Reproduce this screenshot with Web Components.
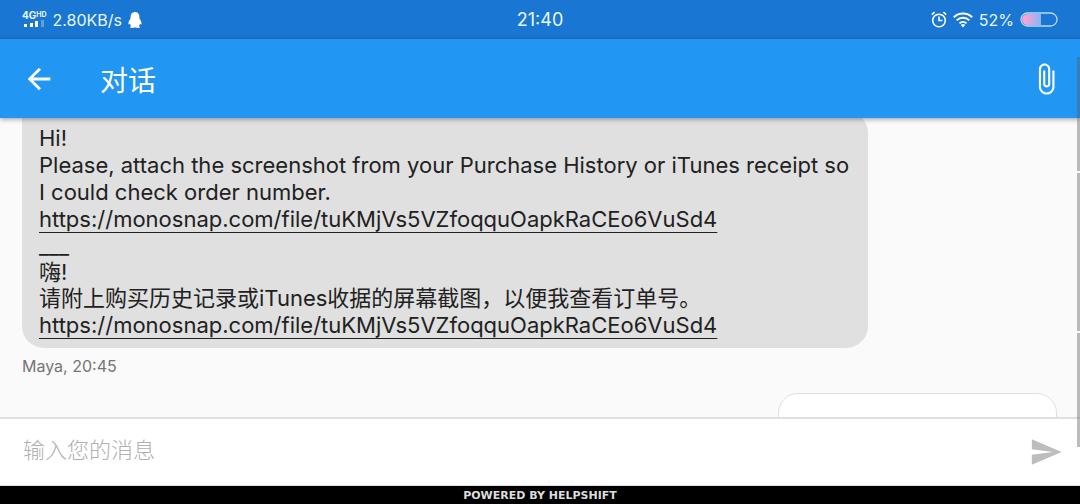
<!DOCTYPE html>
<html lang="zh-CN">
<head>
<meta charset="utf-8">
<meta name="viewport" content="width=device-width, initial-scale=1">
<title>对话</title>
<style>
html, body { margin: 0; height: 100%; }
body { font-family: Inter, "Noto Sans CJK SC", sans-serif; }
</style>
</head>
<body>
<chat-app></chat-app>
<script>
function define(name, html) {
  const template = document.createElement('template');
  template.innerHTML = html;
  customElements.define(name, class extends HTMLElement {
    constructor() {
      super();
      this.attachShadow({ mode: 'open' }).append(template.content.cloneNode(true));
    }
  });
}

define('status-bar', `
<style>
:host { display: grid; grid-template-columns: 1fr auto 1fr; align-items: center; height: 39px; padding: 0 22px; background: #1976d2; color: #e8f8ff; font-size: 16px; line-height: 20px; }
.group { display: flex; align-items: center; gap: 6px; }
.end { justify-content: flex-end; }
.time { font-size: 18px; }
svg { display: block; flex: none; }
.net { display: grid; grid-template-columns: auto auto; font-weight: 700; font-size: 10px; line-height: 9px; }
.net sup { font-size: 7px; line-height: 7px; vertical-align: top; }
.net svg { grid-column: 1 / -1; }
</style>
<div class="group">
  <div class="net"><span>4G</span><sup>HD</sup>
    <svg width="24" height="8" viewBox="0 0 24 8" fill="#fff"><path d="M2 4h3v3H2zM8 3h3v4H8zM13 1h3v6h-3z"/><path d="M19 0h3v7h-3z" opacity=".3"/></svg>
  </div>
  <span>2.80KB/s</span>
  <svg width="14" height="16" viewBox="0 0 14 16" fill="#fff"><path d="M7 0C4 0 2.600 2.200 2.600 5v1.500C1.200 8.200.300 10.200.500 12c.2.900.8.500 1.500-.3.200.900.600 1.600 1.200 2.200-.700.300-1.200.600-1.200 1.100 0 1.100 3.800 1.200 5 .300 1.200.900 5 .800 5-.300 0-.500-.500-.800-1.200-1.100.600-.600 1-1.300 1.200-2.200.700.800 1.300 1.200 1.500.300.200-1.800-.700-3.800-2.100-5.500V5C11.400 2.200 10 0 7 0z"/></svg>
</div>
<time class="time">21:40</time>
<div class="group end">
  <svg width="16" height="17" viewBox="0 0 16 17" fill="none" stroke="#fff" stroke-width="1.600"><circle cx="8" cy="9.500" r="6.300"/><path d="M8 5.500v4h3.500M.8 3.600 3.600 1.200M15.200 3.600l-2.800-2.400"/></svg>
  <svg width="20" height="16" viewBox="0 0 20 16" fill="none" stroke="#fff" stroke-width="2"><path d="M.8 5.200a13.200 13.200 0 0 1 18.400 0M3.700 8.400a9 9 0 0 1 12.600 0M6.500 11.400a5 5 0 0 1 7 0"/><path d="M7.800 13 10 15.500 12.200 13a3.300 3.300 0 0 0-4.400 0z" fill="#fff" stroke="none"/></svg>
  <span>52%</span>
  <svg width="38" height="15" viewBox="0 0 38 15"><defs><linearGradient id="g"><stop offset=".2" stop-color="#f4a4d5"/><stop offset="1" stop-color="#88b4f5"/></linearGradient></defs><path d="M21 2v11H7.500a5.500 5.500 0 0 1 0-11z" fill="url(#g)"/><rect x="1" y="1" width="36" height="13" rx="6.500" fill="none" stroke="#b5dcf6" stroke-width="1.300"/></svg>
</div>`);

define('tool-bar', `
<style>
:host { display: flex; align-items: center; height: 79px; padding: 0 17px 0 22px; background: #2196f3; color: #fff; box-shadow: 0 1px 5px rgba(0,0,0,.4); }
button { display: block; border: 0; padding: 0; background: none; color: inherit; }
svg { display: block; }
h1 { flex: 1; margin: 0 0 0 44px; padding-top: 4px; font-size: 28px; line-height: 40px; font-weight: 400; }
</style>
<button aria-label="返回"><svg width="34" height="34" viewBox="0 0 24 24" fill="currentColor"><path d="M20 11H7.830l5.590-5.590L12 4l-8 8 8 8 1.410-1.410L7.830 13H20v-2z"/></svg></button>
<h1><slot></slot></h1>
<button aria-label="附件"><svg width="34" height="34" viewBox="0 0 24 24" fill="currentColor"><path d="M16.500 6v11.500c0 2.210-1.790 4-4 4s-4-1.790-4-4V5c0-1.380 1.120-2.500 2.500-2.500s2.500 1.120 2.500 2.500v10.500c0 .550-.450 1-1 1s-1-.450-1-1V6H10v9.500c0 1.380 1.120 2.500 2.500 2.500s2.500-1.120 2.500-2.500V5c0-2.210-1.790-4-4-4S7 2.790 7 5v12.500c0 3.040 2.460 5.500 5.500 5.500s5.500-2.460 5.500-5.500V6h-1.500z"/></svg></button>`);

define('agent-message', `
<style>
:host { display: block; }
.bubble { box-sizing: border-box; width: fit-content; max-width: 846px; padding: 14px 16px 9px 17px; border-radius: 0 22px 22px 22px; background: #e0e0e0; color: #212121; font-size: 22px; line-height: 27px; }
.meta { margin-top: 8px; color: #757575; font-size: 16px; line-height: 20px; }
</style>
<div class="bubble"><slot></slot></div>
<div class="meta"><slot name="meta"></slot></div>`);

define('user-message', `
<style>
:host { display: block; box-sizing: border-box; width: 279px; min-height: 70px; border: 1px solid #e0e0e0; border-radius: 20px; background: #fff; }
</style><slot></slot>`);

define('message-list', `
<style>
:host { display: flex; flex-direction: column; gap: 17px; min-height: 0; overflow: hidden; padding: 0 23px 0 22px; background: #fafafa; }
agent-message, user-message { flex: none; }
agent-message { margin-top: -7px; }
user-message { align-self: flex-end; }
p { margin: 0; }
.tight { line-height: 26px; }
a { color: inherit; text-decoration: underline; text-decoration-thickness: 1px; text-underline-offset: 5px; text-decoration-skip-ink: none; }
</style>
<agent-message>
  <p>Hi!</p>
  <p>Please, attach the screenshot from your Purchase History or iTunes receipt so I could check order number.</p>
  <p><a href="https://monosnap.com/file/tuKMjVs5VZfoqquOapkRaCEo6VuSd4">https://monosnap.com/file/tuKMjVs5VZfoqquOapkRaCEo6VuSd4</a></p>
  <p class="tight">___</p>
  <p class="tight">嗨!</p>
  <p>请附上购买历史记录或iTunes收据的屏幕截图，以便我查看订单号。</p>
  <p><a href="https://monosnap.com/file/tuKMjVs5VZfoqquOapkRaCEo6VuSd4">https://monosnap.com/file/tuKMjVs5VZfoqquOapkRaCEo6VuSd4</a></p>
  <span slot="meta">Maya, 20:45</span>
</agent-message>
<user-message></user-message>`);

define('message-composer', `
<style>
:host { display: flex; align-items: center; box-sizing: border-box; height: 69px; padding: 0 17px 0 23px; background: #fff; border-top: 2px solid #e0e0e0; border-bottom: 1px solid #e0e0e0; }
input { flex: 1; min-width: 0; border: 0; padding: 0 0 4px; outline: 0; background: none; font: 300 22px/32px Inter, "Noto Sans CJK SC", sans-serif; color: #212121; }
input::placeholder { color: #b0b0b0; opacity: 1; }
button { border: 0; padding: 0; background: none; color: #bdbdbd; }
svg { display: block; }
</style>
<input type="text" aria-label="消息" placeholder="输入您的消息">
<button aria-label="发送"><svg width="34" height="34" viewBox="0 0 24 24" fill="currentColor"><path d="M2.010 21L23 12 2.010 3 2 10l15 2-15 2z"/></svg></button>`);

define('powered-by', `
<style>
:host { display: block; height: 18px; background: #000; color: #ddd; text-align: center; font: 700 11px/20px "DejaVu Sans", sans-serif; }
</style><slot></slot>`);

define('scroll-rail', `
<style>
:host { position: absolute; z-index: 3; right: 0; top: 57px; bottom: 57px; width: 3px; display: grid; grid-template-rows: 114fr 158fr 114fr; gap: 2px; }
i { background: rgba(90,90,90,.4); }
</style><i></i><i></i><i></i>`);

define('chat-app', `
<style>
:host { position: relative; display: grid; grid-template-rows: auto auto minmax(0, 1fr) auto auto; height: 100vh; overflow: hidden; }
tool-bar { position: relative; z-index: 2; }
</style>
<status-bar></status-bar>
<tool-bar>对话</tool-bar>
<message-list></message-list>
<message-composer></message-composer>
<powered-by>POWERED BY HELPSHIFT</powered-by>
<scroll-rail></scroll-rail>`);
</script>
</body>
</html>
